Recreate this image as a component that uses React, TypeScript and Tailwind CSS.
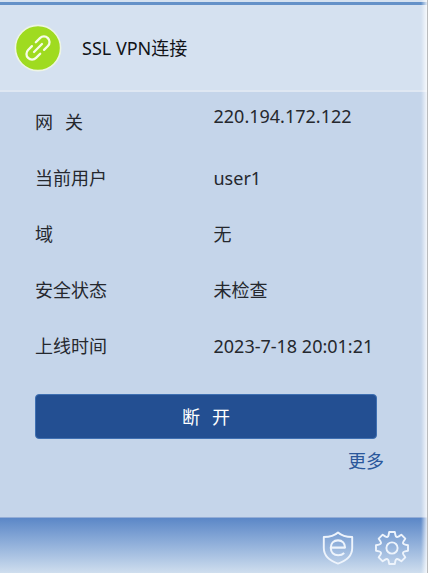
import React from 'react';

interface InfoRowProps {
  label: string;
  value: string;
  valueClassName?: string;
}

const rows: InfoRowProps[] = [
  { label: '网\u2004\u2004关', value: '220.194.172.122', valueClassName: 'pb-3' },
  { label: '当前用户', value: 'user1' },
  { label: '域', value: '无' },
  { label: '安全状态', value: '未检查' },
  { label: '上线时间', value: '2023-7-18 20:01:21' },
];

function LinkBadge() {
  return (
    <svg viewBox="0 0 48 48" className="h-12 w-12 shrink-0" fill="none" aria-hidden="true">
      <circle cx="24" cy="24" r="22.6" fill="#9fdb20" stroke="#eef5e4" strokeWidth="1.6" />
      <g transform="rotate(-45 24 24)" stroke="#f7fce8" strokeWidth="2.3" strokeLinecap="round">
        <path d="M21 18.4H15.6A5.6 5.6 0 0 0 15.6 29.6H21.5" />
        <path d="M26.5 18.4H32.4A5.6 5.6 0 0 1 32.4 29.6H27" />
        <path d="M18.4 24H29.6" />
      </g>
    </svg>
  );
}

function ShieldIcon() {
  return (
    <svg viewBox="0 0 32 34" className="h-[34px] w-8" fill="none" stroke="#eef4fc" strokeWidth="1.9" strokeLinejoin="round" aria-hidden="true">
      <path d="M16 1.5C12.5 4.8 7 6 1.8 6V17C1.8 25 8.5 30 16 32.6C23.5 30 30.2 25 30.2 17V6C25 6 19.5 4.8 16 1.5Z" />
      <path d="M9 16.6H23C23 12.4 20.4 9.4 16 9.4C11.6 9.4 8.8 12.6 8.8 16.8C8.8 21.2 11.6 24.2 16.2 24.2C18.6 24.2 20.8 23.4 22.2 22" strokeWidth="2.1" />
    </svg>
  );
}

function GearIcon() {
  return (
    <svg viewBox="-18 -18 36 36" className="h-9 w-9" fill="none" stroke="#eef4fc" strokeWidth="1.9" strokeLinejoin="round" aria-hidden="true">
      <path d="M-2.8 -16H2.8L3.4 -13Q4 -9.8 6.8 -11.6L9.3 -13.3L13.3 -9.3L11.6 -6.8Q9.8 -4 13 -3.4L16 -2.8V2.8L13 3.4Q9.8 4 11.6 6.8L13.3 9.3L9.3 13.3L6.8 11.6Q4 9.8 3.4 13L2.8 16H-2.8L-3.4 13Q-4 9.8 -6.8 11.6L-9.3 13.3L-13.3 9.3L-11.6 6.8Q-9.8 4 -13 3.4L-16 2.8V-2.8L-13 -3.4Q-9.8 -4 -11.6 -6.8L-13.3 -9.3L-9.3 -13.3L-6.8 -11.6Q-4 -9.8 -3.4 -13Z" />
      <circle r="5.6" />
    </svg>
  );
}

function InfoRow({ label, value, valueClassName = '' }: InfoRowProps) {
  return (
    <div className="flex h-7 items-center">
      <dt className="w-1/2 max-w-[179px] shrink-0">{label}</dt>
      <dd className={`whitespace-nowrap ${valueClassName}`}>{value}</dd>
    </div>
  );
}

export default function App() {
  return (
    <div className="relative flex min-h-screen flex-col border-r border-[#b9bbbd] bg-[#c5d5ea] font-['Noto_Sans','Noto_Sans_CJK_SC',sans-serif] text-lg leading-7 text-[#25282e]">
      <header className="border-b-2 border-[#dfe7f2] bg-[#d5e1f0] pt-0.5">
        <div className="h-[3px] bg-[#6491c8]" />
        <div className="flex h-[85px] items-center gap-5 px-3.5">
          <LinkBadge />
          <h1 className="text-[#111317]">SSL VPN连接</h1>
        </div>
      </header>

      <main className="flex grow flex-col px-[35px] pt-4">
        <dl className="flex flex-col gap-7">
          {rows.map((row) => (
            <InfoRow key={row.label} {...row} />
          ))}
        </dl>
        <button type="button" className="mt-[34px] mr-[15px] h-[45px] rounded border border-[#3f70b2] bg-[#234f92] text-white">
          断{'\u2004\u2004'}开
        </button>
        <a href="#more" className="mt-2 mr-2 self-end text-[#2a579b]">
          更多
        </a>
      </main>

      <footer className="flex h-14 items-center justify-end gap-5 border-t border-[#94add6] bg-linear-to-b from-[#5b87c7] to-[#cfdeee] pt-1 pr-[17px]">
        <button type="button" aria-label="安全">
          <ShieldIcon />
        </button>
        <button type="button" aria-label="设置">
          <GearIcon />
        </button>
      </footer>

      {/* soft highlight along the window's right edge */}
      <div className="pointer-events-none absolute inset-y-0 right-0 w-1.5 bg-linear-to-r from-white/0 to-white/80" />
    </div>
  );
}
